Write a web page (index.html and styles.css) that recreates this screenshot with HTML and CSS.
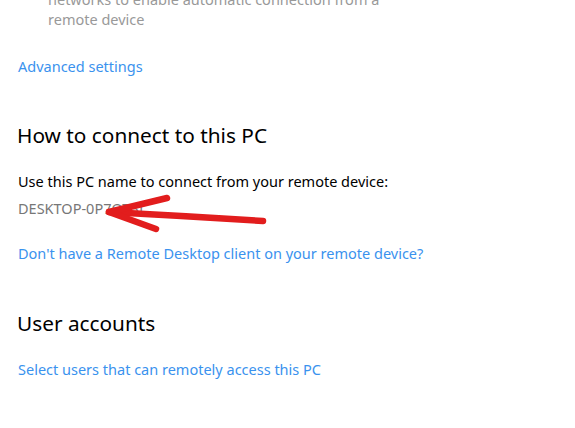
FILE: index.html
```html
<!DOCTYPE html>
<html>
<head>
<meta charset="utf-8">
<link rel="stylesheet" href="styles.css">
</head>
<body>
<main class="page">
  <div class="desc">
    <p>networks to enable automatic connection from a</p>
    <p>remote device</p>
  </div>
  <a class="link link-adv" href="#">Advanced settings</a>

  <h2 class="heading heading-connect">How to connect to this PC</h2>
  <p class="text">Use this PC name to connect from your remote device:</p>
  <p class="pcname">DESKTOP-0P7QT3I</p>
  <a class="link link-client" href="#">Don't have a Remote Desktop client on your remote device?</a>

  <h2 class="heading heading-users">User accounts</h2>
  <a class="link link-users" href="#">Select users that can remotely access this PC</a>

  <svg class="arrow" width="575" height="428" viewBox="0 0 575 428">
    <g fill="none" stroke="#e21d1d" stroke-width="6.5" stroke-linecap="round" stroke-linejoin="round">
      <path d="M263 221 Q185 216 109 212"/>
      <path d="M167 198 L109 212 L156 229"/>
    </g>
  </svg>
</main>
</body>
</html>
```
FILE: styles.css
```css
html, body {
  margin: 0;
  padding: 0;
  background: #ffffff;
}
.page {
  position: relative;
  width: 575px;
  height: 428px;
  overflow: hidden;
  font-family: "Noto Sans", "Open Sans", sans-serif;
  font-size: 14.5px;
  line-height: 20px;
  color: #000;
  display: flex;
  flex-direction: column;
  align-items: flex-start;
  padding-left: 18px;
  box-sizing: border-box;
}
.page p { margin: 0; }
.desc {
  margin-top: -11px;
  padding-left: 30px;
  color: #999999;
}
.link {
  display: block;
  color: #3a92ee;
  text-decoration: none;
}
.link-adv { margin-top: 27px; }
.heading {
  margin: 0 0 0 -1px;
  font-weight: 400;
  font-size: 20.8px;
  line-height: 28px;
  color: #000;
}
.heading-connect { margin-top: 45px; }
.text { margin-top: 22px !important; }
.pcname { margin-top: 7px !important; color: #777777; }
.link-client { margin-top: 25px; }
.heading-users { margin-top: 46px; }
.link-users { margin-top: 22px; }
.arrow {
  position: absolute;
  left: 0;
  top: 0;
  pointer-events: none;
}
```
